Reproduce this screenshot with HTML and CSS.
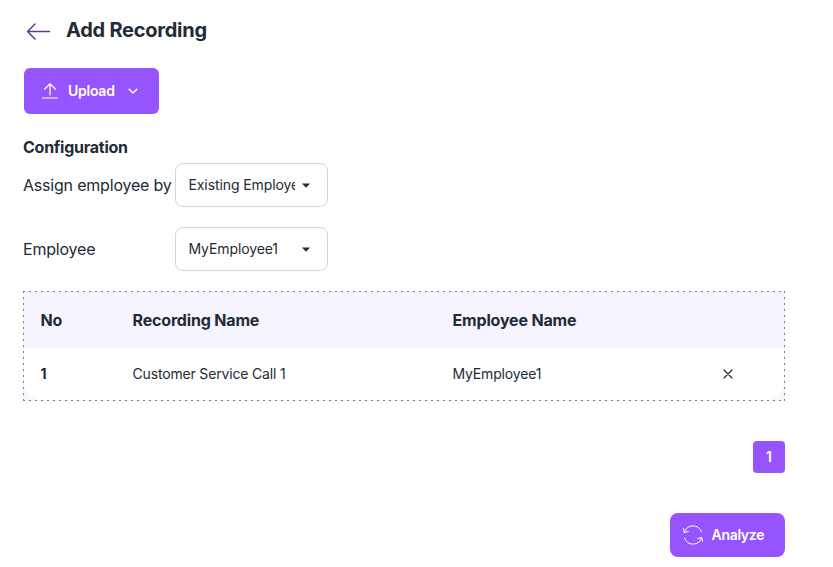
FILE: index.html
```html
<!DOCTYPE html>
<html lang="en">
<head>
<meta charset="utf-8">
<title>Add Recording</title>
<link rel="stylesheet" href="styles.css">
</head>
<body>
<main class="page">
  <header class="heading">
    <svg class="back" width="30" height="30" viewBox="0 0 30 30"><path d="M26.500 15.500H4.500M12 8L4.500 15.500l7.500 7.500"/></svg>
    <h1>Add Recording</h1>
  </header>
  <button class="btn upload">
    <svg class="icon" width="18" height="18" viewBox="0 0 18 18"><path d="M9 13V2M3.500 7.200L9 1.800l5.500 5.400M1.500 16h15"/></svg>
    <span class="upload-label">Upload</span>
    <svg class="chevron" width="10" height="8" viewBox="0 0 10 8"><path d="M1.200 2.200l3.800 3.800 3.800-3.800"/></svg>
  </button>
  <section class="config">
    <h2>Configuration</h2>
    <div class="field">
      <label>Assign employee by</label>
      <div class="select"><span class="value">Existing Employee</span><svg class="caret" width="8" height="5" viewBox="0 0 8 5"><path d="M0 0.500h8L4 4.800z"/></svg></div>
    </div>
    <div class="field">
      <label>Employee</label>
      <div class="select"><span class="value">MyEmployee1</span><svg class="caret" width="8" height="5" viewBox="0 0 8 5"><path d="M0 0.500h8L4 4.800z"/></svg></div>
    </div>
  </section>
  <section class="table">
    <div class="row head"><span>No</span><span>Recording Name</span><span>Employee Name</span><span></span></div>
    <div class="row item"><span class="num">1</span><span>Customer Service Call 1</span><span>MyEmployee1</span>
      <svg class="close" width="10" height="10" viewBox="0 0 10 10"><path d="M1 1l8 8M9 1l-8 8"/></svg></div>
  </section>
  <nav class="pager"><button class="pagenum">1</button></nav>
  <footer class="actions">
    <button class="btn analyze">
      <svg class="refresh" width="20" height="20" viewBox="0 0 20 20"><path d="M1.300 7.500A9 9 0 0 1 18.500 7M.5 3.500l.8 4 4-1M18.700 12.500A9 9 0 0 1 1.500 13M19.500 16.500l-.8-4-4 1"/></svg>
      <span class="analyze-label">Analyze</span>
    </button>
  </footer>
</main>
</body>
</html>
```
FILE: styles.css
```css
* { box-sizing: border-box; }
body { margin: 0; background: #fff; color: #212b36; font: 14px/22px Inter, sans-serif; }
.page { width: 833px; height: 567px; padding: 15px 48px 0 23px; overflow: hidden; }
svg { flex: none; fill: none; stroke-linecap: round; stroke-linejoin: round; }
h1, h2 { margin: 0; font-weight: 700; }
.heading { display: flex; align-items: center; height: 30px; gap: 13px; }
.heading h1 { font-size: 20px; line-height: 30px; letter-spacing: -0.25px; }
.back { stroke: #67389a; stroke-width: 1.5; position: relative; top: 1px; }
.btn { display: flex; align-items: center; border: 0; background: #9654ff; color: #fff; font: 600 14px/22px Inter, sans-serif; }
.upload { width: 135px; height: 46px; margin: 23px 0 0 1px; padding: 0 0 0 17px; border-radius: 6px; }
.icon { stroke: #fff; stroke-width: 1.2; margin-right: 9px; }
.chevron { stroke: #fff; stroke-width: 1.5; margin-left: 13px; }
.upload-label { letter-spacing: -0.25px; }
.config h2 { margin-top: 21px; height: 28px; font-size: 16px; line-height: 24px; letter-spacing: -0.25px; }
.field { display: flex; align-items: center; height: 44px; margin-bottom: 20px; }
.field label { width: 152px; font-size: 16px; white-space: nowrap; letter-spacing: -0.2px; }
.select { display: flex; align-items: center; width: 153px; height: 44px; padding: 0 16px 0 12.5px; border: 1px solid #d3d5d8; border-radius: 8px; }
.value { width: 106.5px; overflow: hidden; white-space: nowrap; letter-spacing: -0.1px; }
.caret { fill: #212b36; margin-left: 7px; }
.table {
  height: 110px;
  padding: 1px;
  background:
    repeating-linear-gradient(90deg, #85828f 0 2px, transparent 2px 6px) top / 100% 1px no-repeat,
    repeating-linear-gradient(90deg, #85828f 0 2px, transparent 2px 6px) bottom / 100% 1px no-repeat,
    repeating-linear-gradient(180deg, #85828f 0 2px, transparent 2px 6px) left / 1px 100% no-repeat,
    repeating-linear-gradient(180deg, #85828f 0 2px, transparent 2px 6px) right / 1px 100% no-repeat,
    #f6f4ff;
}
.row { display: grid; grid-template-columns: 92px 320px 270px 1fr; align-items: center; padding-left: 16.5px; }
.head { height: 56px; font-size: 16px; font-weight: 700; letter-spacing: -0.17px; }
.item { height: 52px; background: #fff; border-radius: 0 0 16px 16px; letter-spacing: -0.17px; }
.num { font-weight: 700; }
.close { stroke: #212b36; stroke-width: 1.2; }
.pager { display: flex; justify-content: flex-end; margin-top: 40px; }
.pagenum { width: 32px; height: 32px; padding: 0; border: 0; border-radius: 4px; background: #9654ff; color: #fff; font: 600 14px/22px Inter, sans-serif; }
.actions { display: flex; justify-content: flex-end; margin-top: 40px; }
.analyze { width: 115px; height: 44px; padding: 0 0 0 13px; border-radius: 8px; }
.refresh { stroke: #fff; stroke-width: 1; margin-right: 8.5px; }
.analyze-label { letter-spacing: -0.3px; }
```
